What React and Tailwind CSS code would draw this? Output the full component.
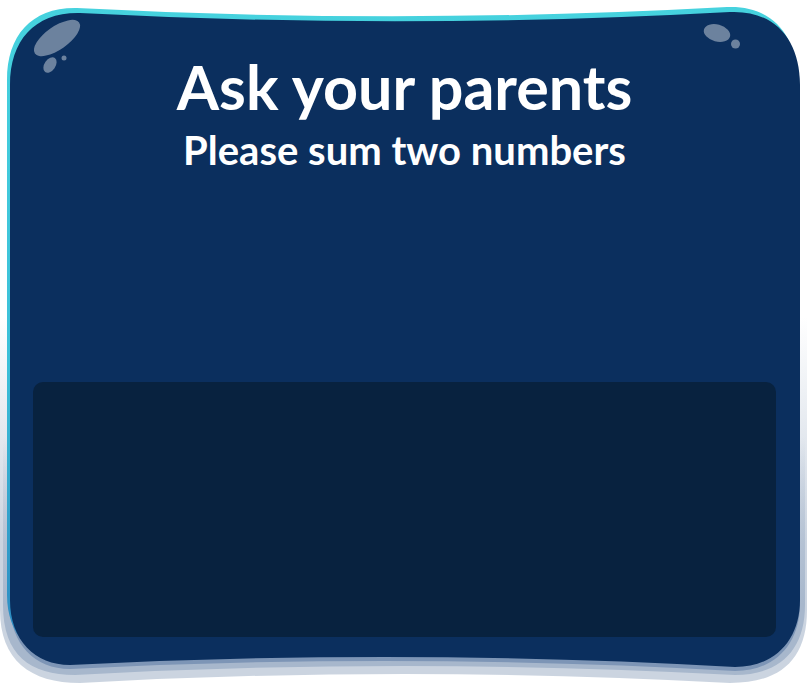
import React from "react";

// wavy panel outline, shared by the cyan rim and the navy body
const PANEL =
  "M 10 85 C 10 40, 35 12, 80 13 Q 403 30, 730 12 C 775 10, 800 40, 800 85 L 800 600 C 800 640, 775 667, 735 667 Q 403 648, 70 665 C 35 665, 10 640, 10 600 Z";

const Frame = () => (
  <svg
    className="absolute inset-0"
    width="807"
    height="684"
    viewBox="0 0 807 684"
    aria-hidden="true"
  >
    <defs>
      <linearGradient id="shadowFade" x1="0" y1="0" x2="0" y2="1">
        <stop offset="0.35" stopColor="#cbd4e0" stopOpacity="0" />
        <stop offset="0.75" stopColor="#cbd4e0" stopOpacity="1" />
      </linearGradient>
      <linearGradient id="shadowMid" x1="0" y1="0" x2="0" y2="1">
        <stop offset="0.5" stopColor="#a7b7cc" stopOpacity="0" />
        <stop offset="0.85" stopColor="#a7b7cc" stopOpacity="1" />
      </linearGradient>
      <linearGradient id="rim" x1="0" y1="0" x2="0" y2="1">
        <stop offset="0" stopColor="#46d2de" />
        <stop offset="0.55" stopColor="#3cbfd8" />
        <stop offset="1" stopColor="#2a86c0" />
      </linearGradient>
    </defs>

    {/* soft shadow under the panel */}
    <path
      d="M 0 120 L 0 610 C 0 660, 30 683, 80 683 Q 403 665, 730 683 C 780 683, 807 660, 807 610 L 807 120 Z"
      fill="url(#shadowFade)"
    />
    <path
      d="M 3 200 L 3 605 C 3 655, 30 675, 75 675 Q 403 657, 735 675 C 780 675, 805 650, 805 605 L 805 200 Z"
      fill="url(#shadowMid)"
    />
    <path d={PANEL} transform="translate(0 4)" fill="#7d95b6" />

    {/* cyan rim + body */}
    <path d={PANEL} transform="translate(-3 -5)" fill="url(#rim)" />
    <path d={PANEL} fill="#0b2f5e" />

    {/* glossy bubbles */}
    <g fill="#ffffff" fillOpacity="0.4">
      <ellipse cx="57" cy="38" rx="27" ry="11.5" transform="rotate(-35 57 38)" />
      <ellipse cx="50" cy="65" rx="5.5" ry="8.5" transform="rotate(35 50 65)" />
      <circle cx="64" cy="58" r="2.5" />
      <ellipse cx="717" cy="33" rx="13.5" ry="8.5" transform="rotate(15 717 33)" />
      <circle cx="735.5" cy="44" r="4.5" />
    </g>
  </svg>
);

export default function App() {
  return (
    <div className="relative w-[807px] h-[684px] overflow-hidden bg-white font-['Lato','Liberation_Sans',sans-serif]">
      <Frame />

      <div className="relative flex flex-col items-center h-full pt-[56px] pl-[33px] pr-[31px] pb-[47px]">
        <h1 className="text-[61px] leading-[61px] font-bold text-white">
          Ask your parents
        </h1>
        <p className="mt-[13px] text-[40px] leading-[40px] font-bold text-white">
          Please sum two numbers
        </p>

        <div className="flex-1" />

        <div className="self-stretch h-[255px] rounded-[10px] bg-[#08223f]"></div>
      </div>
    </div>
  );
}
